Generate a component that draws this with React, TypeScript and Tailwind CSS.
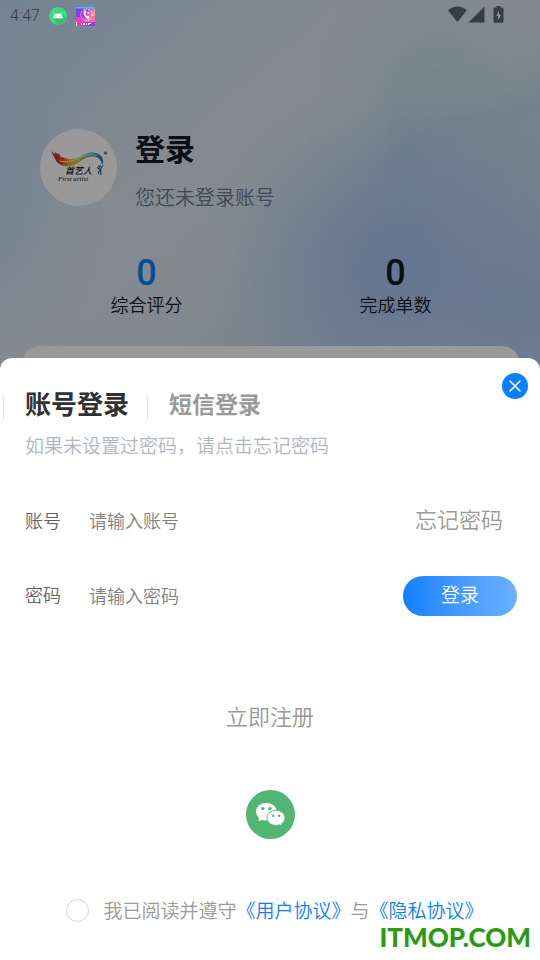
import { useState } from "react";

function AndroidBadge() {
  return (
    <svg viewBox="0 0 18 18" className="size-[18px]" aria-hidden="true">
      <circle cx="9" cy="9" r="9" fill="#3ddc84" />
      <path d="M4.500 11 8 17.900A9 9 0 0 0 17.800 11L13.200 8z" fill="#34c274" />
      <path d="M4 11.200C4.200 8.500 6.200 6.600 9 6.600s4.800 1.900 5 4.600z" fill="#fff" />
      <path d="M5.200 5.600 6.600 8M12.800 5.600 11.400 8" stroke="#fff" strokeWidth="0.800" />
      <circle cx="6.900" cy="9.300" r="0.600" fill="#3ddc84" />
      <circle cx="11.100" cy="9.300" r="0.600" fill="#3ddc84" />
    </svg>
  );
}

function CallAppBadge() {
  return (
    <svg viewBox="0 0 19 19" className="size-[19px]" aria-hidden="true">
      <defs>
        <linearGradient id="call-bg" x1="0" y1="0" x2="1" y2="0.500">
          <stop offset="0" stopColor="#5a4df0" />
          <stop offset="0.450" stopColor="#b02be0" />
          <stop offset="1" stopColor="#ffb48a" />
        </linearGradient>
        <linearGradient id="call-bar" x1="0" y1="0" x2="1" y2="0">
          <stop offset="0" stopColor="#ff3d9a" />
          <stop offset="1" stopColor="#9a2bff" />
        </linearGradient>
      </defs>
      <rect width="19" height="19" fill="url(#call-bg)" />
      <rect width="19" height="1.500" fill="#35c8f5" />
      <path d="M0 10h4l5 5H0zM14 9h5v6h-6z" fill="#ff4fa5" opacity="0.700" />
      <circle cx="10.500" cy="7.800" r="5.700" fill="none" stroke="#fff" strokeWidth="0.900" strokeDasharray="1.600 1.200" />
      <path d="M8.300 3.500c-2 2.500.3 7.500 4.200 8.200l1.300-1.500-1.800-1.500-1 .6c-1-.7-1.500-1.700-1.600-2.700l1-.7-.5-2.400z" fill="#fff" />
      <path d="M12.200 4.500v2.500" stroke="#fff" strokeWidth="0.900" />
      <rect y="15" width="19" height="4" fill="url(#call-bar)" />
      <path d="M0 15h1v4H0zM5 16h1v2H5zM7 16h2v2H7zM10 16h1v2h-1zM12 16h3v1h-2v1h-1z" fill="#fff" />
    </svg>
  );
}

function StatusBar() {
  return (
    <div className="relative z-20 flex h-8 items-center justify-between pr-9 pl-[10px] text-[#363d44]">
      <div className="flex items-center">
        <span className="w-[39px] font-[Roboto] text-[16px]">4:47</span>
        <AndroidBadge />
        <span className="ml-[9px]">
          <CallAppBadge />
        </span>
      </div>
      <svg viewBox="0 0 56 17" className="mb-[3px] h-[17px] w-14" fill="currentColor" aria-hidden="true">
        <path d="M0 4.300C2.500 1.900 5.700.5 9.400.5s6.900 1.400 9.400 3.800L9.400 16z" />
        <path d="M36.500.5V16.500H20.500z" />
        <path d="M48.500 0h4v1.500h1.800c.7 0 1.200.5 1.200 1.200v12.800c0 .7-.5 1.200-1.200 1.200h-7.600c-.7 0-1.200-.5-1.200-1.200V2.700c0-.7.5-1.200 1.200-1.200h1.800z" />
        <path d="M51 4.500 48.300 10h1.800v4.500L53 8.800h-2z" fill="#8e98a2" />
      </svg>
    </div>
  );
}

function Backdrop() {
  return (
    <svg viewBox="0 0 540 374" preserveAspectRatio="none" className="absolute inset-0 size-full" aria-hidden="true">
      <defs>
        <linearGradient id="sky" x1="0" y1="0" x2="0.850" y2="0.700">
          <stop offset="0" stopColor="#c2dbf5" />
          <stop offset="0.450" stopColor="#dae7f0" />
          <stop offset="0.700" stopColor="#dae7ef" />
          <stop offset="1" stopColor="#c4d6ea" />
        </linearGradient>
        <radialGradient id="glow">
          <stop offset="0" stopColor="#a5c4f0" />
          <stop offset="0.250" stopColor="#a8c4f0" stopOpacity="0.850" />
          <stop offset="0.600" stopColor="#b0caf2" stopOpacity="0.450" />
          <stop offset="0.850" stopColor="#b6cef2" stopOpacity="0.120" />
          <stop offset="1" stopColor="#b8d0f4" stopOpacity="0" />
        </radialGradient>
        <filter id="soft" x="-100%" y="-100%" width="300%" height="300%">
          <feGaussianBlur stdDeviation="12" />
        </filter>
        <filter id="haze" x="-100%" y="-100%" width="300%" height="300%">
          <feGaussianBlur stdDeviation="28" />
        </filter>
      </defs>
      <rect width="540" height="374" fill="url(#sky)" />
      <ellipse cx="0" cy="180" rx="40" ry="130" fill="#c2daf8" opacity="0.700" filter="url(#haze)" />
      <ellipse cx="440" cy="80" rx="60" ry="50" fill="#bfdde6" opacity="0.700" filter="url(#haze)" />
      <ellipse cx="460" cy="170" rx="100" ry="40" fill="#b6d2ea" opacity="0.700" filter="url(#haze)" />
      <ellipse cx="400" cy="265" rx="200" ry="185" fill="url(#glow)" />
      <ellipse cx="520" cy="310" rx="140" ry="130" fill="url(#glow)" opacity="0.700" />
      <path d="M397 80h10l6 120h-24z" fill="#a8cee6" opacity="0.500" filter="url(#soft)" />
      <path d="M400 142 560 90v10L400 152z" fill="#a2cbe6" opacity="0.800" filter="url(#soft)" />
    </svg>
  );
}

function ArtistLogo() {
  return (
    <svg viewBox="0 0 77 77" className="size-[77px] shrink-0" role="img" aria-label="首艺人">
      <defs>
        <linearGradient id="ribbon" x1="11" y1="0" x2="64" y2="0" gradientUnits="userSpaceOnUse">
          <stop offset="0" stopColor="#c81d1d" />
          <stop offset="0.200" stopColor="#e6432a" />
          <stop offset="0.360" stopColor="#f2b32c" />
          <stop offset="0.540" stopColor="#b8d238" />
          <stop offset="0.720" stopColor="#46b7c4" />
          <stop offset="1" stopColor="#1767ae" />
        </linearGradient>
      </defs>
      <circle cx="38.500" cy="38.500" r="38.500" fill="#fff" />
      <path
        d="M11 22l4 3.500-.5-2.500 3.500 2 1-.5 2 4 2-.5c5 3 11 3 18-1C48 23 54 22 60 26c3 2.500 4 6 2 11-.2-6-3-9-8-9.300-7-.8-11 3.300-17 6.800-8 4.500-17 3-20.500-2z"
        fill="url(#ribbon)"
      />
      <path d="M20 32c8 2.500 15-1 21-4s11-3 16-1.500" fill="none" stroke="#fff6b0" strokeWidth="0.900" />
      <path d="M57 38.500l3 2 3-4M60 40.500l-2 4.500M60.500 40l.5 6" fill="none" stroke="#1767ae" strokeWidth="1.200" />
      <circle cx="59.500" cy="37.500" r="1.200" fill="#1767ae" />
      <circle cx="65.500" cy="24" r="1.300" fill="#888" stroke="#555" strokeWidth="0.500" />
      <text x="25" y="45" fontSize="9" fontStyle="italic" fontWeight="500" fill="#111" fontFamily="'Noto Sans CJK SC', sans-serif">
        首艺人
      </text>
      <text x="18" y="52" fontSize="7" fontStyle="italic" fill="#222" fontFamily="'Liberation Serif', serif">
        First artist
      </text>
    </svg>
  );
}

function Stat({ value, label, valueClass }: { value: string; label: string; valueClass: string }) {
  return (
    <div className="flex flex-col items-center">
      <dd className={`order-first font-[Roboto] text-[36px] leading-9 font-medium ${valueClass}`}>{value}</dd>
      <dt className="text-[18px] leading-[26px] text-[#111827]">{label}</dt>
    </div>
  );
}

function WechatIcon() {
  return (
    <svg viewBox="0 0 49 49" className="size-[49px]" aria-hidden="true">
      <circle cx="24.500" cy="24.500" r="24.500" fill="#50b674" />
      <path d="M13 26 12.600 31.200 18.500 29z" fill="#fff" />
      <ellipse cx="20.300" cy="21.600" rx="10.400" ry="8.900" fill="#fff" />
      <path
        d="M30 20.300c5.100 0 9 3.400 9 7.600 0 2.400-1.300 4.500-3.300 5.900l.6 2.300-2.800-1.300c-1.100.4-2.200.6-3.500.6-5.100 0-9-3.300-9-7.500s3.900-7.600 9-7.600z"
        fill="#fff"
        stroke="#50b674"
        strokeWidth="0.900"
      />
      <circle cx="16.800" cy="18.600" r="1.700" fill="#50b674" />
      <circle cx="24" cy="18.600" r="1.700" fill="#50b674" />
      <circle cx="27.300" cy="25.700" r="1.200" fill="#50b674" />
      <circle cx="33" cy="25.700" r="1.200" fill="#50b674" />
    </svg>
  );
}

function LoginSheet() {
  const [agreed, setAgreed] = useState(false);
  return (
    <form
      className="relative z-20 -mt-4 flex-1 rounded-t-xl bg-white pt-[26px]"
      onSubmit={(event) => event.preventDefault()}
    >
      <button
        type="button"
        aria-label="关闭"
        className="absolute top-[15px] right-3 flex size-[26px] items-center justify-center rounded-full bg-[#0a80ff]"
      >
        <svg viewBox="0 0 12 12" className="size-3" fill="none" stroke="#fff" strokeWidth="1.500" strokeLinecap="round" aria-hidden="true">
          <path d="M1 1l10 10M11 1L1 11" />
        </svg>
      </button>

      <div role="tablist" className="flex h-[38px] items-center pl-[3px] font-bold">
        <span className="mt-2 h-6 w-px bg-[#e5e5e8]" />
        <button type="button" role="tab" aria-selected="true" className="mr-[18px] ml-[21px] text-[26px] leading-[38px] text-[#303133]">
          账号登录
        </button>
        <span className="mt-2 h-6 w-px bg-[#e5e5e8]" />
        <button type="button" role="tab" aria-selected="false" className="ml-[21px] text-[23px] leading-[38px] text-[#999999]">
          短信登录
        </button>
      </div>
      <p className="mt-[10px] px-[25px] text-[19px] leading-[26px] text-[#b0b6c2]">如果未设置过密码，请点击忘记密码</p>

      <div className="mt-[42px] flex h-10 items-center pr-[37px] pl-[25px]">
        <label htmlFor="account" className="w-16 text-[18px] text-[#606266]">
          账号
        </label>
        <input
          id="account"
          type="text"
          placeholder="请输入账号"
          className="h-10 min-w-0 flex-1 text-[18px] outline-none placeholder:text-[#808080]"
        />
        <button type="button" className="pb-1 text-[22px] text-[#999999]">
          忘记密码
        </button>
      </div>
      <div className="mt-9 flex h-10 items-center pr-[23px] pl-[25px]">
        <label htmlFor="password" className="w-16 pb-[3px] text-[18px] text-[#606266]">
          密码
        </label>
        <input
          id="password"
          type="password"
          placeholder="请输入密码"
          className="h-10 min-w-0 flex-1 pb-[3px] text-[18px] outline-none placeholder:text-[#808080]"
        />
        <button
          type="submit"
          className="h-10 w-[114px] rounded-full bg-linear-to-r from-[#0a80ff] to-[#6bb1ff] pb-[3px] text-[19px] text-white"
        >
          登录
        </button>
      </div>

      <div className="mt-[83px] flex flex-col items-center">
        <button type="button" className="text-[22px] leading-8 text-[#999999]">
          立即注册
        </button>
        <button type="button" aria-label="微信登录" className="mt-[59px] rounded-full">
          <WechatIcon />
        </button>
      </div>

      <div className="mt-[59px] flex h-6 items-center justify-center pl-[10px] text-[19px] leading-6 text-[#999999]">
        <input
          id="agree"
          type="checkbox"
          checked={agreed}
          onChange={(event) => setAgreed(event.target.checked)}
          className="mr-[14px] size-[23px] shrink-0 appearance-none rounded-full border border-[#d5d5d5] checked:bg-[#0a80ff]"
        />
        <p>
          <label htmlFor="agree">我已阅读并遵守</label>
          <a href="#terms" className="text-[#0a80ff]">《用户协议》</a>与<a href="#privacy" className="text-[#0a80ff]">《隐私协议》</a>
        </p>
      </div>
      <p className="mt-0.5 pr-[9px] text-right font-[Lato] text-[26px] leading-[26px] font-black text-[#2a9a14]">
        ITMOP.COM
      </p>
    </form>
  );
}

export default function App() {
  return (
    <main className="relative flex min-h-screen flex-col bg-[#dfe8ef] font-['Noto_Sans_CJK_SC',sans-serif] font-[350]">
      <div className="relative">
        <Backdrop />
        <StatusBar />
        <header className="relative mt-[97px] flex pl-10">
          <ArtistLogo />
          <div className="ml-[18px]">
            <h1 className="text-[30px] leading-9 font-bold text-[#111827]">登录</h1>
            <p className="mt-4 text-[20px] leading-8 text-[#6b7a90]">您还未登录账号</p>
          </div>
        </header>
        <dl className="relative mt-[42px] mr-5 ml-[22px] grid grid-cols-2">
          <Stat value="0" label="综合评分" valueClass="text-[#0a80ff]" />
          <Stat value="0" label="完成单数" valueClass="text-[#111827]" />
        </dl>
        <div className="relative mt-[29px] mr-5 ml-[22px] h-7 rounded-t-[18px] bg-white" />
      </div>
      <div className="absolute inset-0 z-10 bg-black/40" />
      <LoginSheet />
    </main>
  );
}
